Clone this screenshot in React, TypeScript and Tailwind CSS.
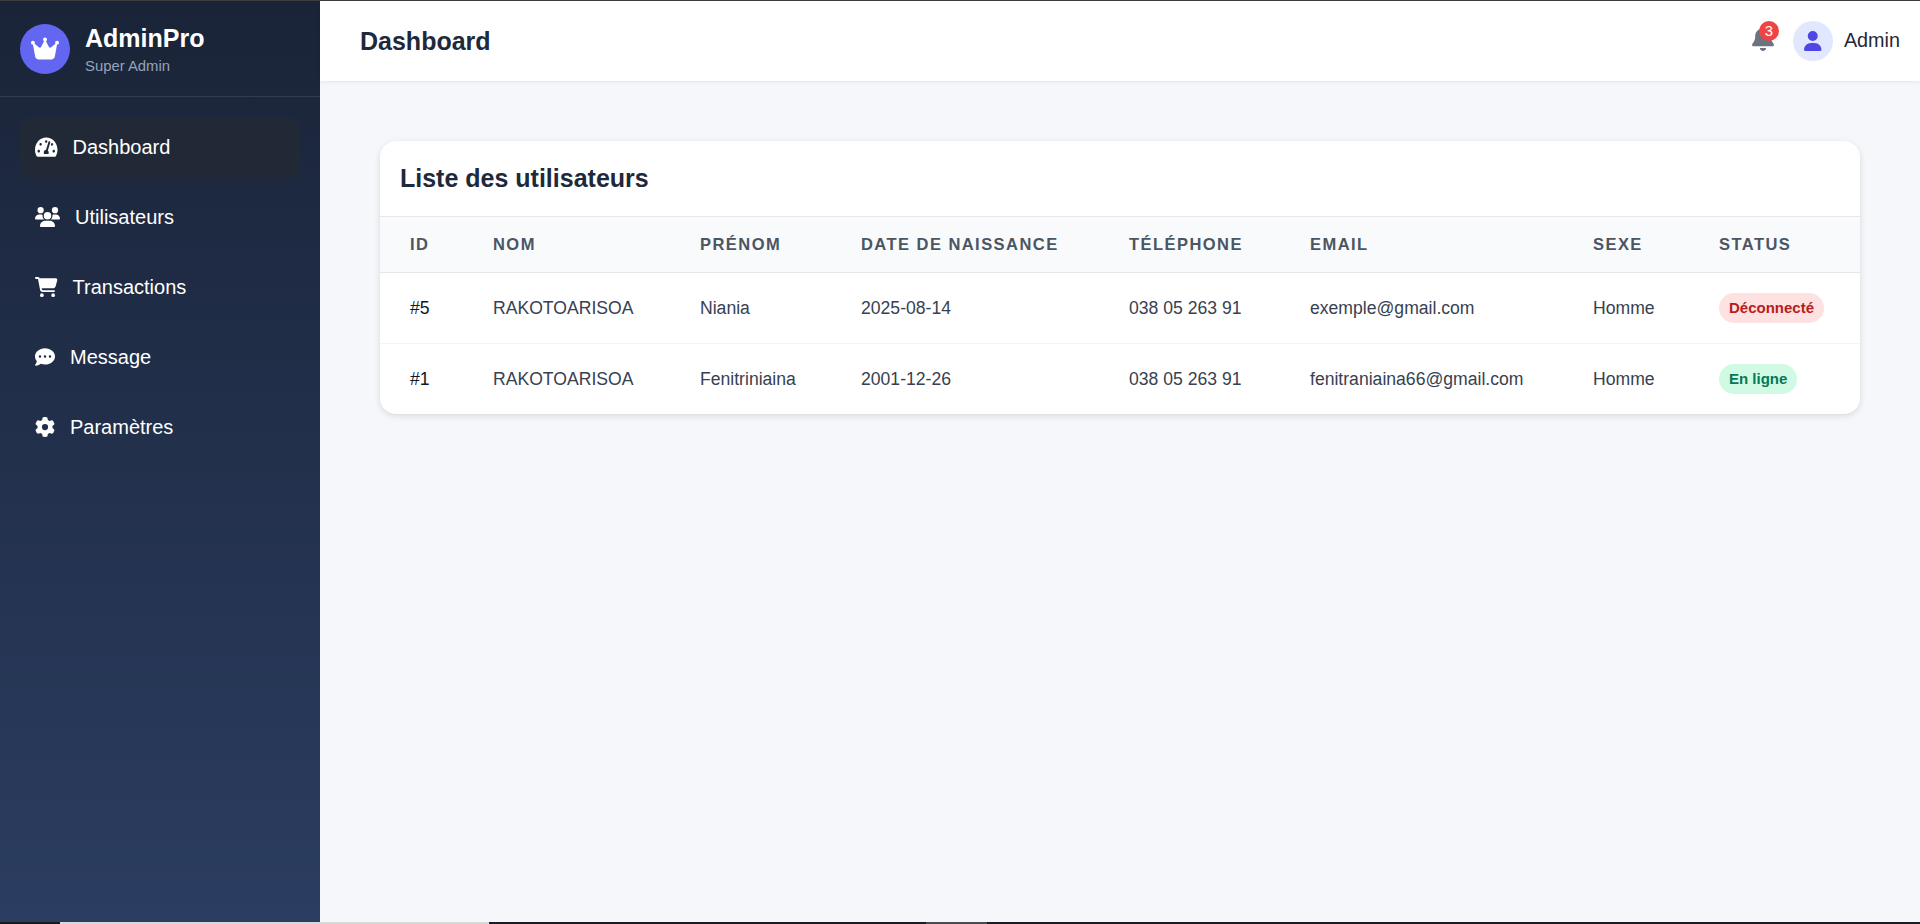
import type { IconType } from 'react-icons';
import { FaTachometerAlt } from 'react-icons/fa';
import { FaBell, FaCartShopping, FaCommentDots, FaCrown, FaGear, FaUser, FaUsers } from 'react-icons/fa6';

interface NavItem {
  label: string;
  icon: IconType;
  iconClass: string;
  active?: boolean;
}

const navItems: NavItem[] = [
  { label: 'Dashboard', icon: FaTachometerAlt, iconClass: 'w-[22.5px] h-[22px]', active: true },
  { label: 'Utilisateurs', icon: FaUsers, iconClass: 'w-[25px] h-[20px]' },
  { label: 'Transactions', icon: FaCartShopping, iconClass: 'w-[22.5px] h-[20px]' },
  { label: 'Message', icon: FaCommentDots, iconClass: 'w-[20px] h-[20px]' },
  { label: 'Paramètres', icon: FaGear, iconClass: 'w-[20px] h-[20px]' },
];

const users = [
  {
    id: '#5',
    nom: 'RAKOTOARISOA',
    prenom: 'Niania',
    naissance: '2025-08-14',
    telephone: '038 05 263 91',
    email: 'exemple@gmail.com',
    sexe: 'Homme',
    online: false,
  },
  {
    id: '#1',
    nom: 'RAKOTOARISOA',
    prenom: 'Fenitriniaina',
    naissance: '2001-12-26',
    telephone: '038 05 263 91',
    email: 'fenitraniaina66@gmail.com',
    sexe: 'Homme',
    online: true,
  },
];

const columns = ['ID', 'Nom', 'Prénom', 'Date de naissance', 'Téléphone', 'Email', 'Sexe', 'Status'];

const Sidebar = () => (
  <aside className="w-[320px] shrink-0 bg-gradient-to-b from-[#1a2438] to-[#2b3d61] text-white">
    <div className="h-[96px] flex items-center gap-[15px] px-5 border-b border-white/10">
      <div className="w-[50px] h-[50px] rounded-full bg-[#6366f1] flex items-center justify-center">
        <FaCrown className="w-[28px] h-[25px]" />
      </div>
      <div className="pt-[2px]">
        <div className="text-[25px] leading-[30px] font-bold">AdminPro</div>
        <div className="text-[14.85px] leading-[20px] mt-[3px] text-[#94a3b8]">Super Admin</div>
      </div>
    </div>
    <nav className="p-5 flex flex-col gap-[10px]">
      {navItems.map((item) => {
        const Icon = item.icon;
        return (
          <a
            key={item.label}
            className={`h-[60px] px-[15px] flex items-center gap-[15px] rounded-xl text-[20px] ${
              item.active ? 'bg-[#212936]' : ''
            }`}
          >
            <Icon className={item.iconClass} preserveAspectRatio={item.active ? 'none' : undefined} />
            <span>{item.label}</span>
          </a>
        );
      })}
    </nav>
  </aside>
);

const Topbar = () => (
  <header className="h-[80px] shrink-0 bg-white flex items-center justify-between pl-10 pr-5 shadow-[0_1px_3px_rgba(0,0,0,0.08)]">
    <h1 className="text-[25px] font-bold text-[#1e293b] pt-[1px]">Dashboard</h1>
    <div className="flex items-center">
      <div className="relative mr-[19px] mb-[5px]">
        <FaBell className="w-[22px] h-[25px] text-[#6b7280]" />
        <span className="absolute -top-[5px] -right-[5px] w-5 h-5 rounded-full bg-[#ef4444] text-white text-[14.85px] flex items-center justify-center">
          3
        </span>
      </div>
      <div className="w-10 h-10 rounded-full bg-[#e0e7ff] flex items-center justify-center mr-[11px]">
        <FaUser className="w-[17.5px] h-[20px] text-[#4f46e5]" />
      </div>
      <span className="text-[19.8px] text-[#1f2937]">Admin</span>
    </div>
  </header>
);

const UsersTable = () => (
  <section className="bg-white rounded-2xl shadow-[0_2px_6px_rgba(0,0,0,0.12)] overflow-hidden">
    <div className="h-[75px] px-5 flex items-center">
      <h2 className="text-[25px] font-bold text-[#1e293b]">Liste des utilisateurs</h2>
    </div>
    <table className="w-full table-fixed border-separate border-spacing-0">
      <colgroup>
        <col className="w-[83px]" />
        <col className="w-[207px]" />
        <col className="w-[161px]" />
        <col className="w-[268px]" />
        <col className="w-[181px]" />
        <col className="w-[283px]" />
        <col className="w-[126px]" />
        <col className="w-[171px]" />
      </colgroup>
      <thead>
        <tr>
          {columns.map((col) => (
            <th
              key={col}
              className="h-[57px] bg-[#f9fafb] border-y border-[#e5e7eb] pl-[30px] pr-0 text-left text-[16.5px] font-bold uppercase tracking-[1.45px] text-[#4b5563]"
            >
              {col}
            </th>
          ))}
        </tr>
      </thead>
      <tbody>
        {users.map((u, i) => {
          const cell = `pl-[30px] pr-0 text-[17.6px] text-[#374151] ${
            i === 0 ? 'h-[71px] border-b border-[#f3f4f6]' : 'h-[70px]'
          }`;
          return (
            <tr key={u.id}>
              <td className={`${cell} !text-[#111827]`}>{u.id}</td>
              <td className={cell}>{u.nom}</td>
              <td className={cell}>{u.prenom}</td>
              <td className={cell}>{u.naissance}</td>
              <td className={cell}>{u.telephone}</td>
              <td className={cell}>{u.email}</td>
              <td className={cell}>{u.sexe}</td>
              <td className={cell}>
                <span
                  className={`inline-flex items-center h-[30px] px-[10px] rounded-full text-[15px] font-bold align-middle ${
                    u.online ? 'bg-[#d1fae5] text-[#047857]' : 'bg-[#fee2e2] text-[#b91c1c]'
                  }`}
                >
                  {u.online ? 'En ligne' : 'Déconnecté'}
                </span>
              </td>
            </tr>
          );
        })}
      </tbody>
    </table>
  </section>
);

export default function App() {
  return (
    <div className="h-screen flex flex-col overflow-hidden font-['Liberation_Sans',Arial,sans-serif]">
      <div className="h-px shrink-0 bg-[#3c3c3c]" />
      <div className="flex-1 min-h-0 flex">
        <Sidebar />
        <div className="flex-1 min-w-0 flex flex-col bg-[#f5f7fb]">
          <Topbar />
          <main className="p-[60px]">
            <UsersTable />
          </main>
        </div>
      </div>
      {/* taskbar sliver at the bottom of the capture */}
      <div className="h-[2px] shrink-0 flex bg-[#1c1c24]">
        <div className="w-[60px] bg-[#1a1a1a]" />
        <div className="w-[429px] bg-[#d8d8d8]" />
        <div className="w-[437px]" />
        <div className="w-[61px] bg-[#4a4a50]" />
      </div>
    </div>
  );
}
